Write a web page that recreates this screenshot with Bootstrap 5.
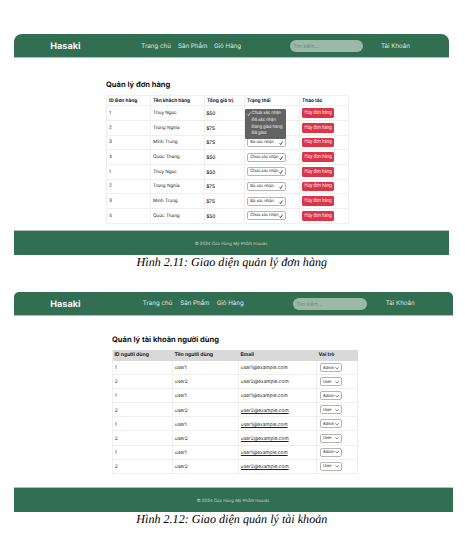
<!DOCTYPE html>
<html lang="vi">
<head>
<meta charset="utf-8">
<meta name="viewport" content="width=device-width, initial-scale=1">
<title>Hasaki</title>
<link href="https://cdn.jsdelivr.net/npm/bootstrap@5.3.0/dist/css/bootstrap.min.css" rel="stylesheet">
<style>
body{width:465px;height:535px;overflow:hidden;background:#fff;font-family:Inter,sans-serif;color:#222;line-height:1;padding-top:34px;text-rendering:geometricPrecision}
.screen{margin-left:14px;width:435px;height:221px}
.screen.users{width:439px;height:220px}
.topbar{height:22.5px;background:#326f52;border-radius:8px 8px 0 0;box-shadow:0 1px 0 #a9c4b6;padding:1.5px 0 0;color:#dfeae4;font-size:6.2px;flex:none}
.users .topbar{border-radius:5px 5px 0 0}
.brand{width:127.3px;padding:1px 0 0 36.3px;font-size:9.1px;font-weight:700;color:#f2f7f4}
.links{width:148.7px;padding-top:1.6px}
.account{padding-top:1.6px}
.links a,.account{color:inherit;text-decoration:none;white-space:nowrap}
.l1{width:36.7px}.l2{width:36px}
.search{width:73px;height:12px;border:0;border-radius:6px;background:#9bb8a9;padding:0 3.2px;font-size:5px;margin-right:18px;color:#728c7f}
.search::placeholder{color:#728c7f;opacity:1}
.users .brand{width:128.8px}
.users .links{width:150.4px;padding-top:.6px}
.users .l1{width:37.4px}.users .l2{width:36.5px}
.users .search{width:74px;margin-right:18.6px}
.users .account{padding-top:.6px}
.pane{margin-left:92px;width:242px;padding-top:23.5px}
.users .pane{margin-left:98px;width:246px;padding-top:20.8px}
.pane h1{font-size:7.55px;font-weight:700;color:#111;margin:0;height:14.8px;line-height:9px;white-space:nowrap}
.users .pane h1{height:14.5px}
.grid-table{table-layout:fixed;border-collapse:separate;border-spacing:0;border:solid #efefef;border-width:1px 0 0 1px;font-size:4.6px;width:243px}
.grid-table th,.grid-table td{padding:0 0 0 2px;border:solid #efefef;border-width:0 1px 1px 0;white-space:nowrap;vertical-align:middle;line-height:6px}
.grid-table th{height:10.5px;font-size:4.8px;font-weight:700;color:#1c1c1c}
.grid-table td{height:14.7px;padding-top:1.4px}
.grid-table td.price{padding-left:1.2px;font-weight:500;font-size:4.8px}
.grid-table td.tool{padding-top:0}
.users .grid-table{width:246px;border-top:0}
.users .grid-table th{height:11.2px;font-size:5.15px;background:#d9d9d9;border-color:#d9d9d9;padding-left:1.4px}
.users .grid-table td{height:14.1px;padding-left:1.8px;font-size:4.8px}
.users .grid-table td.mail{font-size:4.8px}
.pick{width:38.5px;height:9px;border:1px solid #b5b5b5;border-radius:2px;padding:.8px 1px 0 2.2px;font-size:4.25px;letter-spacing:-.14px;color:#222;background:#fff}
.pick svg{width:4.2px;height:4.2px;flex:none}
.role{width:22px;font-size:4px;padding:.6px 1px 0 2.4px}
.users .grid-table td.tool{padding-left:2.5px}
.cancel{--bs-btn-line-height:1;width:32.3px;height:9.6px;font-size:4.2px;letter-spacing:-.07px;font-weight:500;border:0;border-radius:1.4px;padding:0;background:#dc3545;color:#f9dfe2;display:block}
.menu{left:0;top:2.5px;width:40.5px;height:30px;background:#606361;color:#e6e6e6;border-radius:1.2px;padding:2.6px 0 0 6.6px;font-size:4.4px;letter-spacing:-.13px;z-index:2}
.menu div{height:6.7px;line-height:6.7px}
.menu svg{left:2.4px;top:3.6px;width:4px;height:4px}
.foot{height:24px;background:#326f52;box-shadow:0 -1px 0 #a9c4b6;color:#c7d8cf;font-size:4.3px;padding-top:3.6px;flex:none}
.cap{font:italic 12.12px/15px "Liberation Serif",serif;color:#000;text-align:center;height:37px;white-space:nowrap;width:463.6px}
</style>
<script src="https://cdn.jsdelivr.net/npm/bootstrap@5.3.0/dist/js/bootstrap.bundle.min.js" defer></script>
</head>
<body>
<svg class="d-none"><symbol id="tick" viewBox="0 0 8 8"><path d="M1.3 4.5 3 7 6.7 1" fill="none" stroke="currentColor" stroke-width="1.5"/></symbol><symbol id="chev" viewBox="0 0 8 8"><path d="M1 2.5 4 5.5 7 2.5" fill="none" stroke="currentColor" stroke-width="1.2"/></symbol></svg>
<section class="screen d-flex flex-column">
<header class="topbar d-flex align-items-center"><div class="brand">Hasaki</div><nav class="links d-flex"><a class="l1" href="#">Trang chủ</a><a class="l2" href="#">Sản Phẩm</a><a href="#">Giỏ Hàng</a></nav><input class="search" placeholder="Tìm kiếm..."><a class="account" href="#">Tài Khoản</a></header>
<main class="pane flex-grow-1"><h1>Quản lý đơn hàng</h1>
<table class="grid-table"><colgroup><col style="width:44px"><col style="width:54px"><col style="width:40px"><col style="width:55px"><col style="width:49px"></colgroup>
<thead><tr><th>ID Đơn hàng</th><th>Tên khách hàng</th><th>Tổng giá trị</th><th>Trạng thái</th><th>Thao tác</th></tr></thead><tbody id="orders"></tbody></table></main>
<footer class="foot d-flex align-items-center justify-content-center">© 2024 Cửa Hàng Mỹ Phẩm Hasaki.</footer>
</section>
<div class="cap">Hình 2.11: Giao diện quản lý đơn hàng</div>
<section class="screen users d-flex flex-column">
<header class="topbar d-flex align-items-center"><div class="brand">Hasaki</div><nav class="links d-flex"><a class="l1" href="#">Trang chủ</a><a class="l2" href="#">Sản Phẩm</a><a href="#">Giỏ Hàng</a></nav><input class="search" placeholder="Tìm kiếm..."><a class="account" href="#">Tài Khoản</a></header>
<main class="pane flex-grow-1"><h1>Quản lý tài khoản người dùng</h1>
<table class="grid-table"><colgroup><col style="width:60px"><col style="width:66px"><col style="width:78px"><col style="width:41px"></colgroup>
<thead><tr><th>ID người dùng</th><th>Tên người dùng</th><th>Email</th><th>Vai trò</th></tr></thead><tbody id="accounts"></tbody></table></main>
<footer class="foot d-flex align-items-center justify-content-center">© 2024 Cửa Hàng Mỹ Phẩm Hasaki.</footer>
</section>
<div class="cap">Hình 2.12: Giao diện quản lý tài khoản</div>
<script>
const tick='<svg><use href="#tick"/></svg>', chev='<svg><use href="#chev"/></svg>';
const people=['Thuy Ngoc','Trong Nghia','Minh Trung','Quoc Thang'], price=['$50','$75','$75','$50'];
const state=['','','Đã xác nhận','Chưa xác nhận','Chưa xác nhận','Đã xác nhận','Đã xác nhận','Chưa xác nhận'];
const menu='<div class="menu position-absolute"><svg class="position-absolute"><use href="#tick"/></svg><div>Chưa xác nhận</div><div>Đã xác nhận</div><div>Đang giao hàng</div><div>Đã giao</div></div>';
orders.innerHTML=state.map((s,i)=>`<tr><td>${i%4+1}</td><td>${people[i%4]}</td><td class="price">${price[i%4]}</td><td class="tool position-relative">${i==0?menu:s?`<div class="pick d-flex align-items-center justify-content-between">${s}${tick}</div>`:''}</td><td class="tool"><button class="btn cancel">Hủy đơn hàng</button></td></tr>`).join('');
accounts.innerHTML=state.map((s,i)=>`<tr><td>${i%2+1}</td><td>user${i%2+1}</td><td class="mail"><span class="${i>2?'text-decoration-underline':''}">user${i%2+1}@example.com</span></td><td class="tool"><div class="pick role d-flex align-items-center justify-content-between">${i%2?'User':'Admin'}${chev}</div></td></tr>`).join('');
</script>
</body>
</html>
